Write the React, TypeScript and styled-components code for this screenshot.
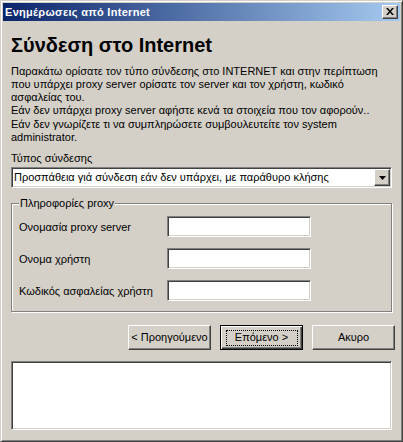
import React from 'react';
import styled, { createGlobalStyle, css } from 'styled-components';

const Global = createGlobalStyle`
  html, body { margin: 0; padding: 0; background: #d4d0c8; }
  body {
    font-family: "Liberation Sans", Arial, sans-serif;
    font-size: 11px;
    color: #000;
  }
  * { box-sizing: border-box; }
`;

const sunken = css`
  border: 1px solid;
  border-color: #808080 #ffffff #ffffff #808080;
  box-shadow: inset 1px 1px 0 #404040, inset -1px -1px 0 #d4d0c8;
`;

const raised = css`
  border: 1px solid;
  border-color: #ffffff #404040 #404040 #ffffff;
  box-shadow: inset -1px -1px 0 #808080, inset 1px 1px 0 #d4d0c8;
`;

const Window = styled.div`
  width: 403px;
  height: 442px;
  background: #d4d0c8;
  border: 1px solid;
  border-color: #d4d0c8 #404040 #404040 #d4d0c8;
  box-shadow: inset 1px 1px 0 #ffffff, inset -1px -1px 0 #808080;
  padding: 2px;
  display: flex;
  flex-direction: column;
`;

const TitleBar = styled.div`
  height: 18px;
  flex: none;
  display: flex;
  align-items: center;
  justify-content: space-between;
  padding: 0 2px 0 2px;
  background: linear-gradient(to right, #0a246a, #a6caf0);
`;

const TitleText = styled.span`
  color: #ffffff;
  font-weight: bold;
  font-size: 11px;
  letter-spacing: 0.3px;
  line-height: 14px;
  white-space: nowrap;
`;

const CloseButton = styled.div`
  width: 16px;
  height: 14px;
  background: #d4d0c8;
  border: 1px solid;
  border-color: #ffffff #404040 #404040 #ffffff;
  box-shadow: inset -1px -1px 0 #808080;
  display: flex;
  align-items: center;
  justify-content: center;
  padding: 0 0 1px 0;
`;

const Client = styled.div`
  flex: 1;
  display: flex;
  flex-direction: column;
  padding: 0 8px;
`;

const Heading = styled.h1`
  margin: 12px 0 0 0;
  font-size: 20px;
  line-height: 24px;
  font-weight: bold;
  white-space: nowrap;
`;

const Para = styled.p<{ $gap: number }>`
  margin: ${(p) => p.$gap}px 0 0 0;
  line-height: 13px;
  white-space: nowrap;
`;

const FieldLabel = styled.div`
  margin-top: 8px;
  line-height: 13px;
`;

const Combo = styled.div`
  margin-top: 2px;
  height: 21px;
  padding: 1px;
  display: flex;
  ${sunken};
`;

const ComboText = styled.div`
  flex: 1;
  background: #ffffff;
  line-height: 17px;
  padding-left: 1px;
  white-space: nowrap;
  overflow: hidden;
`;

const ComboArrow = styled.div`
  width: 16px;
  height: 17px;
  background: #d4d0c8;
  display: flex;
  align-items: center;
  justify-content: center;
  ${raised};
`;

const Group = styled.div`
  position: relative;
  margin-top: 15px;
  height: 109px;
  border: 1px solid #808080;
  box-shadow: inset 1px 1px 0 #ffffff, 1px 1px 0 #ffffff;
  padding: 12px 7px 0 7px;
  display: flex;
  flex-direction: column;
  gap: 11px;
`;

const Legend = styled.span`
  position: absolute;
  top: -7px;
  left: 7px;
  padding: 0 1px;
  background: #d4d0c8;
  line-height: 13px;
`;

const Row = styled.div`
  display: flex;
  align-items: center;
  height: 21px;
`;

const RowLabel = styled.span`
  width: 148px;
  white-space: nowrap;
`;

const TextBox = styled.div`
  width: 144px;
  height: 21px;
  background: #ffffff;
  ${sunken};
`;

const ButtonRow = styled.div`
  margin-top: 13px;
  margin-right: -3px;
  display: flex;
  justify-content: flex-end;
  gap: 9px;
`;

const Button = styled.div<{ $default?: boolean }>`
  position: relative;
  width: 83px;
  height: 25px;
  background: #d4d0c8;
  display: flex;
  align-items: center;
  justify-content: center;
  line-height: 13px;
  white-space: nowrap;
  ${raised};
  ${(p) =>
    p.$default &&
    css`
      border-color: #000000;
      box-shadow: inset 1px 1px 0 #ffffff, inset -1px -1px 0 #404040,
        inset -2px -2px 0 #808080;
    `}
`;

const FocusRing = styled.span`
  position: absolute;
  top: 4px;
  left: 5px;
  right: 4px;
  bottom: 3px;
  border: 1px dotted #000000;
`;

const LogBox = styled.div`
  margin-top: 11px;
  height: 69px;
  background: #ffffff;
  ${sunken};
`;

export default function App() {
  return (
    <>
      <Global />
      <Window>
        <TitleBar>
          <TitleText>Ενημέρωσεις από Internet</TitleText>
          <CloseButton>
            <svg width="8" height="7" viewBox="0 0 8 7">
              <path d="M0 0h2l2 2.5L6 0h2L5 3.5 8 7H6L4 4.5 2 7H0l3-3.5z" fill="#000" />
            </svg>
          </CloseButton>
        </TitleBar>
        <Client>
          <Heading>Σύνδεση στο Internet</Heading>
          <Para $gap={8}>
            Παρακάτω ορίσατε τον τύπο σύνδεσης στο INTERNET και στην περίπτωση
            <br />
            που υπάρχει proxy server ορίσατε τον server και τον χρήστη, κωδικό
            <br />
            ασφαλείας του.
          </Para>
          <Para $gap={0}>Εάν δεν υπάρχει proxy server αφήστε κενά τα στοιχεία που τον αφορούν..</Para>
          <Para $gap={1}>
            Εάν δεν γνωρίζετε τι να συμπληρώσετε συμβουλευτείτε τον system
            <br />
            administrator.
          </Para>
          <FieldLabel>Τύπος σύνδεσης</FieldLabel>
          <Combo>
            <ComboText>Προσπάθεια γιά σύνδεση εάν δεν υπάρχει, με παράθυρο κλήσης</ComboText>
            <ComboArrow>
              <svg width="7" height="4" viewBox="0 0 7 4">
                <path d="M0 0h7L3.5 4z" fill="#000" />
              </svg>
            </ComboArrow>
          </Combo>
          <Group>
            <Legend>Πληροφορίες proxy</Legend>
            <Row>
              <RowLabel>Ονομασία proxy server</RowLabel>
              <TextBox />
            </Row>
            <Row>
              <RowLabel>Ονομα χρήστη</RowLabel>
              <TextBox />
            </Row>
            <Row>
              <RowLabel>Κωδικός ασφαλείας χρήστη</RowLabel>
              <TextBox />
            </Row>
          </Group>
          <ButtonRow>
            <Button>&lt; Προηγούμενο</Button>
            <Button $default>
              <FocusRing />
              Επόμενο &gt;
            </Button>
            <Button>Ακυρο</Button>
          </ButtonRow>
          <LogBox />
        </Client>
      </Window>
    </>
  );
}
